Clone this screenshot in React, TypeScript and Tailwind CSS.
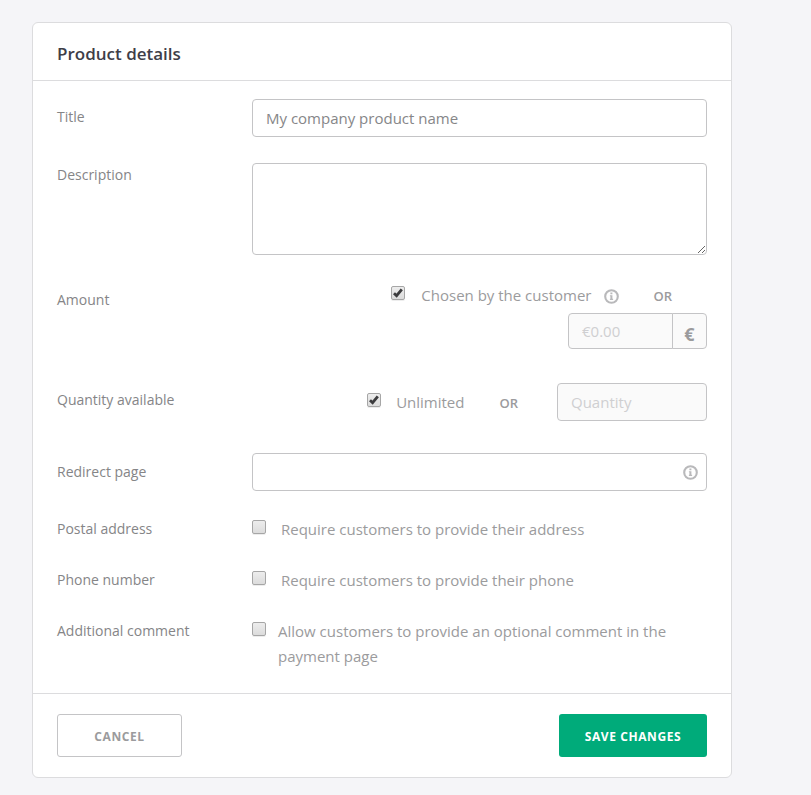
import type { InputHTMLAttributes, ReactNode } from 'react';

const fieldClass =
  'rounded border border-[#c4c4c6] bg-white px-[13px] text-[15px] text-[#8a8a8c] placeholder:text-[#868688] outline-none focus:border-[#00ab7a] disabled:bg-[#fafafa] disabled:placeholder:text-[#cfcfd1]';

function InfoIcon({ className = '' }: { className?: string }) {
  return (
    <svg className={`h-[15px] w-[15px] shrink-0 text-[#b9b9bb] ${className}`} viewBox="0 0 15 15" fill="none" aria-hidden="true">
      <circle cx="7.5" cy="7.5" r="6.3" stroke="currentColor" strokeWidth="2.1" />
      <path d="M6.4 3.6h2v1.6h-2zM5.9 6.2h2.5v3.6h.7v1.2H5.9V9.8h.5V7.3h-.5z" fill="currentColor" />
    </svg>
  );
}

function Checkbox(props: InputHTMLAttributes<HTMLInputElement>) {
  return (
    <span className="relative block h-[14px] w-[14px] shrink-0">
      <input
        type="checkbox"
        className="peer block h-[14px] w-[14px] appearance-none rounded-xs border border-[#a6a6a6] bg-linear-to-b from-[#ededed] to-[#dcdcdc] shadow-[0_1px_0_#ededed]"
        {...props}
      />
      <svg className="pointer-events-none absolute inset-0 hidden h-[14px] w-[14px] peer-checked:block" viewBox="0 0 14 14" aria-hidden="true">
        <path d="M3 7.2l2.6 2.5 5.2-6.4" fill="none" stroke="#3c3c3e" strokeWidth="2.8" />
      </svg>
    </span>
  );
}

function Label({ htmlFor, children, className = '' }: { htmlFor: string; children: ReactNode; className?: string }) {
  return (
    <label htmlFor={htmlFor} className={`w-[195px] shrink-0 text-sm text-[#858587] ${className}`}>
      {children}
    </label>
  );
}

const options = [
  { id: 'address', label: 'Postal address', text: 'Require customers to provide their address', gap: 'gap-[15px]' },
  { id: 'phone', label: 'Phone number', text: 'Require customers to provide their phone', gap: 'gap-[15px]' },
  { id: 'comment', label: 'Additional comment', text: 'Allow customers to provide an optional comment in the payment page', gap: 'gap-3' },
];

export default function App() {
  return (
    <div className="min-h-screen bg-[#f5f5f8] px-8 pt-[22px] pb-4 font-['Open_Sans',sans-serif] text-[15px] text-[#9b9b9d]">
      <form className="max-w-[700px] rounded-md border border-[#dcdcde] bg-white" onSubmit={(e) => e.preventDefault()}>
        <header className="border-b border-[#dcdcde] px-6 pt-[19px] pb-[14px]">
          <h1 className="text-[17px] leading-6 font-semibold text-[#3e3e48]">Product details</h1>
        </header>

        <div className="px-6 pt-[18px] pb-6">
          <div className="flex items-center">
            <Label htmlFor="title" className="pb-0.5">Title</Label>
            <input id="title" type="text" placeholder="My company product name" className={`h-[38px] min-w-0 flex-1 ${fieldClass}`} />
          </div>

          <div className="mt-[26px] flex items-start">
            <Label htmlFor="description" className="pt-0.5">Description</Label>
            <textarea id="description" className={`block h-[92px] min-w-0 flex-1 resize py-2 ${fieldClass}`} />
          </div>

          <div className="mt-[27px] flex items-start">
            <Label htmlFor="amount" className="pt-2">Amount</Label>
            <div className="flex flex-1 flex-col items-end">
              <div className="flex items-center pr-[35px] leading-[25px]">
                <label className="flex items-start gap-4">
                  <span className="pt-[3px]"><Checkbox defaultChecked /></span>
                  Chosen by the customer
                </label>
                <InfoIcon className="mt-0.5 ml-[13px]" />
                <span className="ml-[34px] pt-0.5 text-[13px] leading-[25px] font-semibold">OR</span>
              </div>
              <div className="mt-1 flex h-9">
                <input id="amount" type="text" disabled placeholder="€0.00" className={`w-[105px] rounded-r-none ${fieldClass}`} />
                <span className="-ml-px flex w-[35px] items-center justify-center rounded-r border border-[#c4c4c6] bg-[#fafafa] pt-1.5 text-[18px] font-bold">€</span>
              </div>
            </div>
          </div>

          <div className="mt-[34px] flex items-center">
            <Label htmlFor="quantity" className="pb-1">Quantity available</Label>
            <div className="flex flex-1 items-center justify-end leading-[25px]">
              <label className="flex items-start gap-[15px]">
                <span className="pt-[3px]"><Checkbox defaultChecked /></span>
                Unlimited
              </label>
              <span className="mr-[39px] ml-[35px] pt-0.5 text-[13px] font-semibold">OR</span>
              <input id="quantity" type="text" disabled placeholder="Quantity" className={`h-[38px] w-[150px] ${fieldClass}`} />
            </div>
          </div>

          <div className="mt-8 flex items-center">
            <Label htmlFor="redirect">Redirect page</Label>
            <div className="relative flex-1">
              <input id="redirect" type="text" className={`block h-[38px] w-full ${fieldClass}`} />
              <InfoIcon className="absolute top-3 right-[9px]" />
            </div>
          </div>

          {options.map((option) => (
            <div key={option.id} className="mt-[26px] flex items-start">
              <Label htmlFor={option.id} className="pt-0.5">{option.label}</Label>
              <label className={`flex flex-1 items-start leading-[25px] ${option.gap}`}>
                <span className="pt-[3px]"><Checkbox id={option.id} /></span>
                {option.text}
              </label>
            </div>
          ))}
        </div>

        <footer className="flex items-center justify-between border-t border-[#dcdcde] px-6 py-5">
          <button type="button" className="h-[43px] w-[125px] rounded-[3px] border border-[#c4c4c6] bg-white pt-0.5 text-xs font-bold tracking-wider">
            CANCEL
          </button>
          <button type="submit" className="h-[43px] w-[148px] rounded-[3px] bg-[#00ab7a] pt-0.5 text-xs font-bold tracking-wider text-white">
            SAVE CHANGES
          </button>
        </footer>
      </form>
    </div>
  );
}
